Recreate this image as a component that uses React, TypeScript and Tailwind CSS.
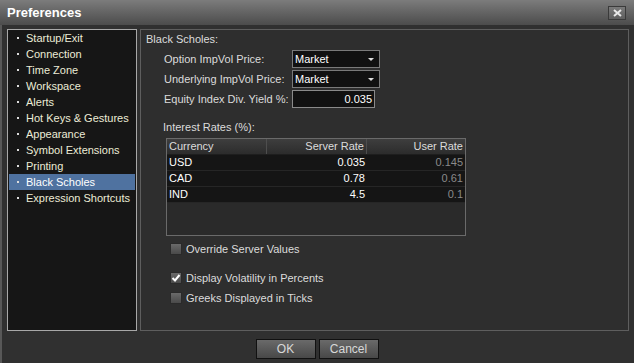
import React, { useState } from 'react';

const navItems = [
  'Startup/Exit',
  'Connection',
  'Time Zone',
  'Workspace',
  'Alerts',
  'Hot Keys & Gestures',
  'Appearance',
  'Symbol Extensions',
  'Printing',
  'Black Scholes',
  'Expression Shortcuts',
];

const rates = [
  { currency: 'USD', server: '0.035', user: '0.145' },
  { currency: 'CAD', server: '0.78', user: '0.61' },
  { currency: 'IND', server: '4.5', user: '0.1' },
];

const Dropdown: React.FC<{ value: string }> = ({ value }) => (
  <div className="w-[88px] h-[18px] bg-[#111111] border border-[#7a7a7a] flex items-center justify-between pl-[2px] pr-[5px] text-white">
    <span>{value}</span>
    <span className="w-0 h-0 border-l-[3px] border-r-[3px] border-t-[3px] border-l-transparent border-r-transparent border-t-[#dddddd]"></span>
  </div>
);

const Checkbox: React.FC<{ checked: boolean; label: string; onToggle: () => void }> = ({ checked, label, onToggle }) => (
  <div className="flex items-center gap-[4px] h-[14px] cursor-default" onClick={onToggle}>
    <div className="w-[12px] h-[12px] border border-[#2a2a2a] bg-gradient-to-b from-[#6a6a6a] to-[#4a4a4a] flex items-center justify-center">
      {checked && (
        <svg width="10" height="10" viewBox="0 0 10 10">
          <path d="M1.5 5 L4 7.5 L8.5 2" stroke="#ffffff" strokeWidth="2" fill="none" />
        </svg>
      )}
    </div>
    <span className="text-[#dcdcdc]">{label}</span>
  </div>
);

const App: React.FC = () => {
  const [active, setActive] = useState('Black Scholes');
  const [override, setOverride] = useState(false);
  const [percents, setPercents] = useState(true);
  const [ticks, setTicks] = useState(false);

  return (
    <div className="w-[634px] h-[363px] bg-[#303030] flex flex-col text-[11px] leading-none select-none" style={{ fontFamily: '"Liberation Sans", Arial, sans-serif' }}>
      {/* title bar */}
      <div className="h-[25px] bg-gradient-to-b from-[#7c7c7c] to-[#4c4c4c] flex items-center justify-between pl-[7px] pr-[8px]">
        <span className="text-white font-bold text-[13px]">Preferences</span>
        <div className="w-[18px] h-[14px] border border-[#3a3a3a] bg-gradient-to-b from-[#7a7a7a] to-[#5e5e5e] flex items-center justify-center">
          <svg width="9" height="8" viewBox="0 0 9 8">
            <path d="M1 1 L8 7 M8 1 L1 7" stroke="#e8e8e8" strokeWidth="2" />
          </svg>
        </div>
      </div>

      <div className="flex-1 flex flex-col border-l-2 border-[#585858] bg-[#303030]">
        <div className="flex gap-[3px] pt-[4px] pl-[5px] pr-[5px]">
          {/* left nav */}
          <div className="w-[130px] h-[302px] bg-[#161616] border border-[#a8a8a8] px-[1px]">
            {navItems.map((item) => (
              <div
                key={item}
                onClick={() => setActive(item)}
                className={`h-[16px] flex items-center pl-[8px] ${active === item ? 'bg-[#4f72a0] text-white' : 'text-[#ececd6]'}`}
              >
                <span className="w-[2px] h-[2px] bg-[#dcdcdc] mr-[7px]"></span>
                <span>{item}</span>
              </div>
            ))}
          </div>

          {/* right content */}
          <div className="flex-1 h-[302px] border border-[#5e5e5e] bg-[#2e2e2e] pl-[5px] pt-[2px] text-[#dcdcdc]">
            <div className="h-[14px] flex items-center">Black Scholes:</div>
            <div className="pl-[18px] mt-[4px] flex flex-col gap-[2px]">
              <div className="flex items-center">
                <span className="w-[128px]">Option ImpVol Price:</span>
                <Dropdown value="Market" />
              </div>
              <div className="flex items-center">
                <span className="w-[128px]">Underlying ImpVol Price:</span>
                <Dropdown value="Market" />
              </div>
              <div className="flex items-center">
                <span className="w-[128px]">Equity Index Div. Yield %:</span>
                <div className="w-[83px] h-[18px] bg-[#111111] border border-[#8a8a8a] flex items-center justify-end pr-[2px] text-white">0.035</div>
              </div>
            </div>

            <div className="pl-[17px] mt-[12px] h-[14px] flex items-center">Interest Rates (%):</div>
            <div className="ml-[20px] mt-[4px] w-[300px] h-[98px] border border-[#6a6a6a] bg-[#2a2a2a]">
              <div className="grid grid-cols-[100px_100px_98px] h-[16px] bg-gradient-to-b from-[#3e3e3e] to-[#2c2c2c] border-b border-[#1e1e1e]">
                <div className="flex items-center pl-[2px] border-r border-[#4e4e4e]">Currency</div>
                <div className="flex items-center justify-end pr-[2px] border-r border-[#4e4e4e]">Server Rate</div>
                <div className="flex items-center justify-end pr-[2px]">User Rate</div>
              </div>
              {rates.map((r) => (
                <div key={r.currency} className="grid grid-cols-[100px_100px_98px] h-[16px] bg-[#151515] border-b border-[#262626] text-white">
                  <div className="flex items-center pl-[2px]">{r.currency}</div>
                  <div className="flex items-center justify-end pr-[2px]">{r.server}</div>
                  <div className="flex items-center justify-end pr-[2px] text-[#8a8a8a]">{r.user}</div>
                </div>
              ))}
            </div>

            <div className="pl-[24px] mt-[6px] flex flex-col">
              <Checkbox checked={override} label="Override Server Values" onToggle={() => setOverride(!override)} />
              <div className="mt-[15px]">
                <Checkbox checked={percents} label="Display Volatility in Percents" onToggle={() => setPercents(!percents)} />
              </div>
              <div className="mt-[6px]">
                <Checkbox checked={ticks} label="Greeks Displayed in Ticks" onToggle={() => setTicks(!ticks)} />
              </div>
            </div>
          </div>
        </div>

        {/* footer */}
        <div className="flex justify-center gap-[3px] pt-[8px] pr-[2px]">
          <button className="w-[60px] h-[20px] border border-[#111111] bg-gradient-to-b from-[#6a6a6a] to-[#484848] text-[#d8d8d8] text-[12px]">OK</button>
          <button className="w-[60px] h-[20px] border border-[#111111] bg-gradient-to-b from-[#6a6a6a] to-[#484848] text-[#d8d8d8] text-[12px]">Cancel</button>
        </div>
      </div>
    </div>
  );
};

export default App;
